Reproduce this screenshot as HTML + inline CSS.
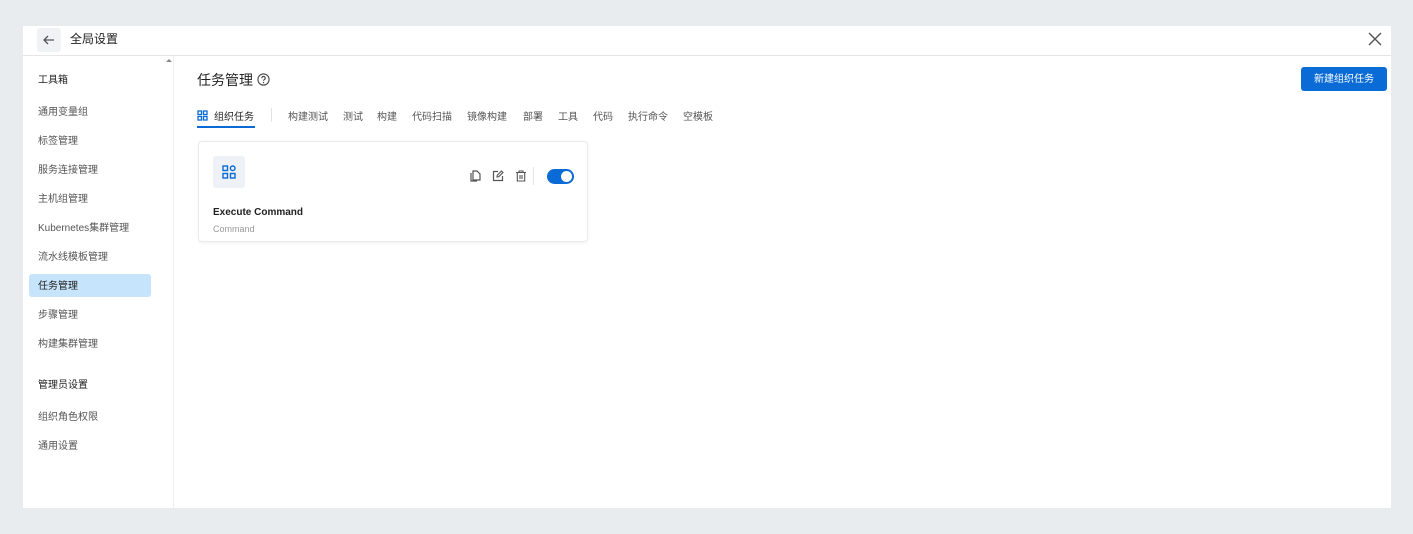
<!DOCTYPE html>
<html><head><meta charset="utf-8"><style>
*{margin:0;padding:0;box-sizing:border-box}
body{width:1413px;height:534px;background:#e9ecef;font-family:"Liberation Sans","Noto Sans CJK SC",sans-serif;color:#333;position:relative;overflow:hidden}
.panel{position:absolute;left:23px;top:26px;width:1368px;height:482px;background:#fff}
.hdr{position:absolute;left:0;top:0;width:1368px;height:30px;border-bottom:1px solid #e6e6e6}
.back{position:absolute;left:14px;top:2px;width:24px;height:24px;background:#f0f2f5;border-radius:3px}
.side{position:absolute;left:0;top:30px;width:151px;height:452px;border-right:1px solid #eee}
.t{position:absolute;font-size:10px;white-space:nowrap;line-height:14px}
.abs{position:absolute}
</style></head><body>
<div class="panel">
 <div class="hdr">
  <div class="back"><svg width="24" height="24" viewBox="0 0 24 24"><path d="M17 12H7M11 8l-4 4 4 4" stroke="#555" stroke-width="1.3" fill="none"/></svg></div>
  <div class="t" style="left:47px;top:6px;font-size:12px;color:#222">全局设置</div>
  <svg class="abs" style="left:1345px;top:6px" width="14" height="14" viewBox="0 0 14 14"><path d="M1 1l12 12M13 1L1 13" stroke="#555" stroke-width="1.4"/></svg>
 </div>
 <div class="side">
  <svg class="abs" style="left:143px;top:2px" width="6" height="5"><path d="M0 4L3 1 6 4z" fill="#888"/></svg>
  <div class="t" style="left:15px;top:18px;color:#222">工具箱</div>
  <div class="t" style="left:15px;top:50px;color:#555">通用变量组</div>
  <div class="t" style="left:15px;top:79px;color:#555">标签管理</div>
  <div class="t" style="left:15px;top:108px;color:#555">服务连接管理</div>
  <div class="t" style="left:15px;top:137px;color:#555">主机组管理</div>
  <div class="t" style="left:15px;top:166px;color:#555">Kubernetes集群管理</div>
  <div class="t" style="left:15px;top:195px;color:#555">流水线模板管理</div>
  <div class="abs" style="left:6px;top:218px;width:122px;height:23px;background:#c6e4fb;border-radius:3px"></div>
  <div class="t" style="left:15px;top:224px;color:#222">任务管理</div>
  <div class="t" style="left:15px;top:253px;color:#555">步骤管理</div>
  <div class="t" style="left:15px;top:282px;color:#555">构建集群管理</div>
  <div class="t" style="left:15px;top:323px;color:#222">管理员设置</div>
  <div class="t" style="left:15px;top:355px;color:#555">组织角色权限</div>
  <div class="t" style="left:15px;top:384px;color:#555">通用设置</div>
 </div>
 <div class="t" style="left:174px;top:45px;font-size:14px;line-height:18px;color:#222">任务管理</div>
 <svg class="abs" style="left:234px;top:47px" width="13" height="13" viewBox="0 0 13 13"><circle cx="6.5" cy="6.5" r="5.6" stroke="#444" stroke-width="1.1" fill="none"/><path d="M4.8 5.2a1.7 1.7 0 1 1 2.4 1.5c-.5.3-.7.6-.7 1.1" stroke="#444" stroke-width="1.1" fill="none"/><circle cx="6.5" cy="9.6" r=".7" fill="#444"/></svg>
 <div class="abs" style="left:1278px;top:41px;width:86px;height:24px;background:#0a6bd6;border-radius:3px;color:#fff;font-size:10px;text-align:center;line-height:14px;padding-top:6px">新建组织任务</div>
 <svg class="abs" style="left:174px;top:84px" width="11" height="11" viewBox="0 0 11 11"><g fill="none" stroke="#0a6bd6" stroke-width="1.3"><rect x="1" y="1" width="3.5" height="3.5"/><rect x="6.5" y="1" width="3.5" height="3.5"/><rect x="1" y="6.5" width="3.5" height="3.5"/><rect x="6.5" y="6.5" width="3.5" height="3.5"/></g></svg>
 <div class="t" style="left:191px;top:85px;color:#222">组织任务</div>
 <div class="abs" style="left:174px;top:100px;width:58px;height:2px;background:#0a6bd6"></div>
 <div class="abs" style="left:248px;top:82px;width:1px;height:14px;background:#e3e3e3"></div>
 <div class="t" style="left:265px;top:85px;color:#555">构建测试</div>
 <div class="t" style="left:320px;top:85px;color:#555">测试</div>
 <div class="t" style="left:354px;top:85px;color:#555">构建</div>
 <div class="t" style="left:389px;top:85px;color:#555">代码扫描</div>
 <div class="t" style="left:444px;top:85px;color:#555">镜像构建</div>
 <div class="t" style="left:500px;top:85px;color:#555">部署</div>
 <div class="t" style="left:535px;top:85px;color:#555">工具</div>
 <div class="t" style="left:570px;top:85px;color:#555">代码</div>
 <div class="t" style="left:605px;top:85px;color:#555">执行命令</div>
 <div class="t" style="left:660px;top:85px;color:#555">空模板</div>
 <div class="abs" style="left:175px;top:115px;width:390px;height:101px;border:1px solid #ebebeb;border-radius:4px;box-shadow:0 1px 3px rgba(0,0,0,.06)">
  <div class="abs" style="left:14px;top:14px;width:32px;height:32px;background:#eef1f5;border-radius:3px"></div>
  <svg class="abs" style="left:23px;top:23px" width="14" height="14" viewBox="0 0 14 14"><g fill="none" stroke="#0a6bd6" stroke-width="1.4"><rect x="1" y="1" width="4.5" height="4.5"/><circle cx="10.7" cy="3.3" r="2.3"/><rect x="1" y="8.5" width="4.5" height="4.5"/><rect x="8.5" y="8.5" width="4.5" height="4.5"/></g></svg>
  <svg class="abs" style="left:270px;top:28px" width="12" height="12" viewBox="0 0 12 12"><path d="M4 1h4l3 3v6H4z M2 3v8h6" fill="none" stroke="#555" stroke-width="1.2"/></svg>
  <svg class="abs" style="left:293px;top:28px" width="12" height="12" viewBox="0 0 12 12"><path d="M6 1.5H1.5v9h9V6" fill="none" stroke="#555" stroke-width="1.2"/><path d="M5 7l.3-1.8L9.5 1l1.5 1.5L6.8 6.7z" fill="none" stroke="#555" stroke-width="1.1"/></svg>
  <svg class="abs" style="left:316px;top:28px" width="12" height="12" viewBox="0 0 12 12"><path d="M1 2.5h10M4 2.5V1h4v1.5M2.3 2.5v8.5h7.4V2.5M5 5v4M7 5v4" fill="none" stroke="#555" stroke-width="1.1"/></svg>
  <div class="abs" style="left:334px;top:25px;width:1px;height:18px;background:#e6e6e6"></div>
  <div class="abs" style="left:348px;top:27px;width:27px;height:15px;background:#0a6bd6;border-radius:8px"><div class="abs" style="left:14px;top:2px;width:11px;height:11px;background:#fff;border-radius:50%"></div></div>
  <div class="t" style="left:14px;top:64px;color:#222;font-weight:bold;font-size:10px">Execute Command</div>
  <div class="t" style="left:14px;top:80px;color:#999;font-size:9px">Command</div>
 </div>
</div>
</body></html>
